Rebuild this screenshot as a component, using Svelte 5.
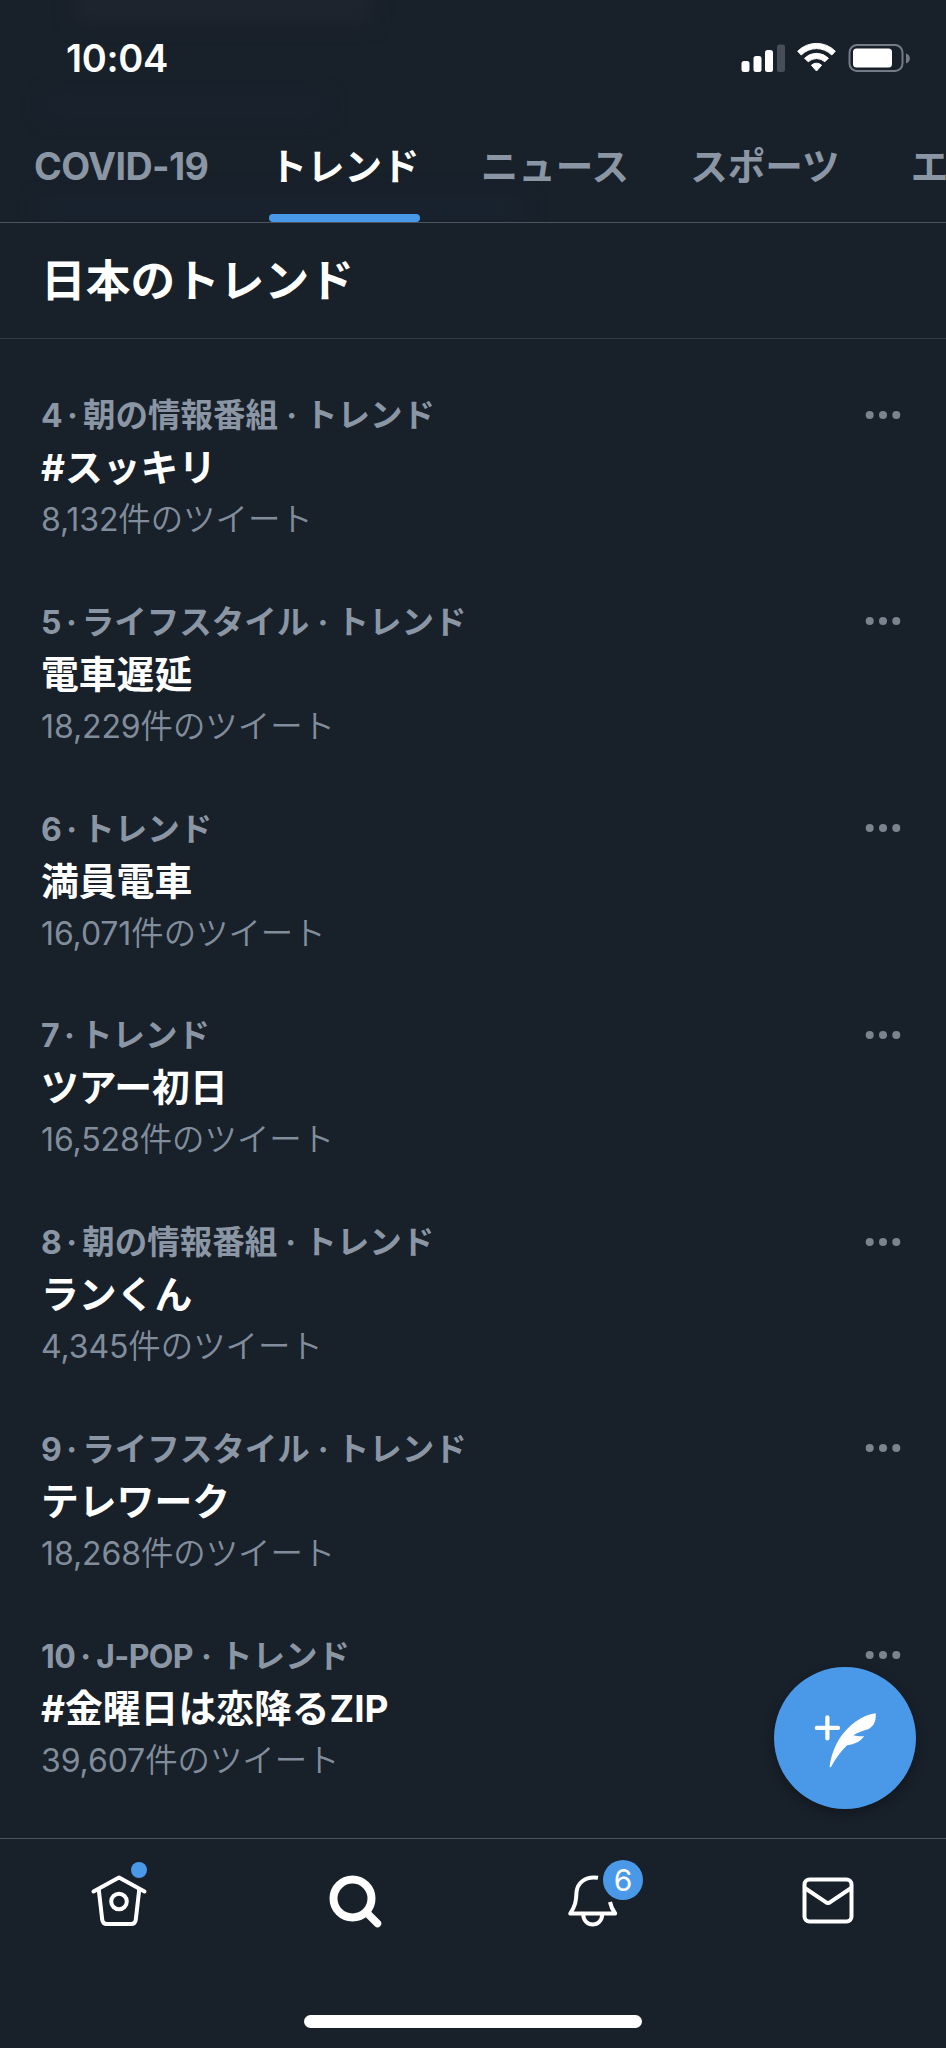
<script lang="ts">
	interface Trend {
		rank: number;
		category?: string;
		title: string;
		count: string;
	}

	const tabs = ['COVID-19', 'トレンド', 'ニュース', 'スポーツ', 'エンターテイメント'];
	let activeTab = 'トレンド';

	const trends: Trend[] = [
		{ rank: 4, category: '朝の情報番組', title: '#スッキリ', count: '8,132' },
		{ rank: 5, category: 'ライフスタイル', title: '電車遅延', count: '18,229' },
		{ rank: 6, title: '満員電車', count: '16,071' },
		{ rank: 7, title: 'ツアー初日', count: '16,528' },
		{ rank: 8, category: '朝の情報番組', title: 'ランくん', count: '4,345' },
		{ rank: 9, category: 'ライフスタイル', title: 'テレワーク', count: '18,268' },
		{ rank: 10, category: 'J-POP', title: '#金曜日は恋降るZIP', count: '39,607' }
	];

	// latin runs get their own size and tracking next to the japanese text
	function split(text: string) {
		return text.split(/([\x21-\x7e]+)/).filter(Boolean);
	}

	function isLatin(part: string) {
		return /^[\x21-\x7e]/.test(part);
	}
</script>

<div class="screen">
	<header>
		<div class="ghost ghost-a"></div>
		<div class="ghost ghost-b"></div>
		<div class="ghost ghost-c"></div>
		<div class="status">
			<span class="time">10:04</span>
			<svg class="status-icons" width="172" height="32" viewBox="0 0 172 32">
				<rect x="1.5" y="19" width="8" height="11" rx="2.5" fill="#fff" />
				<rect x="13.5" y="14" width="8" height="16" rx="2.5" fill="#fff" />
				<rect x="25" y="8" width="8" height="22" rx="2.5" fill="#fff" />
				<rect x="37" y="2.5" width="8" height="27.5" rx="2.5" fill="#474e59" />
				<path d="M57.7 9.2 A26.5 26.5 0 0 1 95.3 9.2 L91.8 13 A21.5 21.5 0 0 0 61.2 13 Z" fill="#fff" stroke="#fff" stroke-width="1" stroke-linejoin="round" />
				<path d="M64.6 16.2 A17 17 0 0 1 88.4 16.2 L84.8 19.8 A12.2 12.2 0 0 0 68.2 19.8 Z" fill="#fff" stroke="#fff" stroke-width="1" stroke-linejoin="round" />
				<path d="M71.4 23.2 A7.5 7.5 0 0 1 81.6 23.2 L76.5 29 Z" fill="#fff" stroke="#fff" stroke-width="1" stroke-linejoin="round" />
				<rect x="109.5" y="3" width="53" height="26" rx="7.5" fill="none" stroke="#757b85" stroke-width="2" />
				<rect x="113" y="6.5" width="39" height="19" rx="3.5" fill="#fff" />
				<path d="M166 11.5 C171.200 13 171.200 20 166 21.5 Z" fill="#757b85" />
			</svg>
		</div>
		<nav class="tabs">
			{#each tabs as tab}
				<button class="tab" class:active={tab === activeTab} class:latin-tab={isLatin(tab)} on:click={() => (activeTab = tab)}>
					{tab}
				</button>
			{/each}
		</nav>
	</header>

	<h1>日本のトレンド</h1>

	<main>
		{#each trends as trend}
			<article class="trend">
				<div class="info">
					<div class="meta">
						<span class="latin">{trend.rank}</span><span class="dot thin">·</span>
						{#if trend.category}
							{#each split(trend.category) as part}<span class:latin={isLatin(part)}>{part}</span>{/each}<span class="dot">·</span>
						{/if}
						<span>トレンド</span>
					</div>
					<div class="title">
						{#each split(trend.title) as part}<span class:latin={isLatin(part)}>{part}</span>{/each}
					</div>
					<div class="count"><span class="latin">{trend.count}</span><span>件のツイート</span></div>
				</div>
				<button class="more" aria-label="その他">
					<svg width="36" height="10" viewBox="0 0 36 10" fill="#7a848f">
						<circle cx="4.7" cy="5" r="4" />
						<circle cx="18" cy="5" r="4" />
						<circle cx="31.3" cy="5" r="4" />
					</svg>
				</button>
			</article>
		{/each}
	</main>

	<button class="compose" aria-label="ツイートする">
		<svg width="142" height="142" viewBox="0 0 141 141">
			<path d="M42.5 60.5H63.5M53 50V71" fill="none" stroke="#fff" stroke-width="4.2" stroke-linecap="round" />
			<path d="M55.2 99.200 C56.5 87 62 73.5 70 64.5 C79 54.5 90 47 101 46 C101.4 52 100 57.5 95.5 60.5 C91.5 63.2 85 63.5 79 67.7 C83 68.9 86.5 69 89.5 68.6 C86.5 73 81.5 77 72.5 77.6 C66.5 83.5 61 91 56.5 99.5 Z" fill="#fff" />
		</svg>
	</button>

	<footer>
		<div class="bar">
			<div class="item">
				<svg width="64" height="64" viewBox="0 0 64 64" fill="none" stroke="#fff" stroke-width="4" stroke-linejoin="round" stroke-linecap="round">
					<path d="M6.5 23.5 L32 9.5 L57.5 23.5" />
					<path d="M11.8 22 L15.2 51.5 Q15.7 56 20 56 H44 Q48.3 56 48.8 51.5 L52.2 22" />
					<circle cx="32" cy="33.5" r="7.8" />
				</svg>
				<span class="new-dot"></span>
			</div>
			<div class="item">
				<svg width="64" height="64" viewBox="0 0 64 64" fill="none" stroke="#fff" stroke-linecap="round">
					<circle cx="29.5" cy="30.5" r="19" stroke-width="8" />
					<path d="M44 45 L54.5 55.5" stroke-width="7.5" />
				</svg>
			</div>
			<div class="item">
				<svg width="64" height="64" viewBox="0 0 64 64" fill="none" stroke="#fff" stroke-width="4" stroke-linejoin="round">
					<path d="M38 9.8 C24.7 7.5 17.2 16 16.5 24 C16 34 15.2 38 10.2 45.5 H55.2 C52.7 42 51 39 50 34" />
					<path d="M23.2 46 C23.2 60 42.2 60 42.2 46" />
				</svg>
				<span class="badge">6</span>
			</div>
			<div class="item">
				<svg width="64" height="64" viewBox="0 0 64 64" fill="none" stroke="#fff" stroke-width="4" stroke-linejoin="round" stroke-linecap="round">
					<rect x="8.5" y="11.5" width="47" height="42" rx="5" />
					<path d="M9.5 20.5 L29.8 34.2 Q32 35.6 34.2 34.2 L54.5 20.5" />
				</svg>
			</div>
		</div>
		<div class="home-indicator"></div>
	</footer>
</div>

<style>
	:global(body) {
		background: #18202a;
	}

	.screen {
		position: relative;
		display: flex;
		flex-direction: column;
		width: 946px;
		height: 2048px;
		overflow: hidden;
		background: #18202a;
		color: #fff;
		font-family: 'Noto Sans CJK JP', sans-serif;
	}

	button {
		padding: 0;
		border: none;
		background: none;
		color: inherit;
		font: inherit;
		cursor: pointer;
	}

	header {
		position: relative;
		display: flex;
		flex-direction: column;
		box-sizing: border-box;
		height: 223px;
		flex: none;
		overflow: hidden;
		border-bottom: 1px solid #4d5560;
	}

	/* content scrolled under the translucent header */
	.ghost {
		position: absolute;
		filter: blur(10px);
	}

	.ghost-a {
		left: 75px;
		top: -12px;
		width: 295px;
		height: 34px;
		background: #1e252f;
	}

	.ghost-b {
		left: 45px;
		top: 96px;
		width: 280px;
		height: 20px;
		background: #19232f;
	}

	.ghost-c {
		left: 40px;
		top: 198px;
		width: 485px;
		height: 20px;
		background: #192430;
	}

	.status {
		position: relative;
		display: flex;
		justify-content: space-between;
		align-items: center;
		height: 116px;
		padding: 0 34px 0 66px;
	}

	.time {
		font-family: Inter, sans-serif;
		font-size: 38px;
		font-weight: 600;
		letter-spacing: -0.3px;
	}

	.tabs {
		position: relative;
		display: flex;
		flex: 1;
		gap: 61px;
		padding-left: 34px;
	}

	.tab {
		display: flex;
		flex: none;
		align-items: center;
		box-sizing: border-box;
		height: 106px;
		padding-bottom: 12px;
		color: #8b96a4;
		font-size: 37.6px;
		font-weight: 700;
		white-space: nowrap;
	}

	.tab:last-child {
		margin-left: 10px;
	}

	.tab.latin-tab {
		padding-bottom: 6px;
		font-family: Inter, sans-serif;
		letter-spacing: -0.6px;
	}

	.tab.active {
		position: relative;
		color: #fff;
	}

	.tab.active::after {
		content: '';
		position: absolute;
		left: 0;
		right: 0;
		bottom: 0;
		height: 8px;
		border-radius: 4px;
		background: #4a99e9;
	}

	h1 {
		box-sizing: border-box;
		flex: none;
		height: 116px;
		margin: 0;
		padding-left: 41px;
		border-bottom: 1px solid #323944;
		font-size: 44.7px;
		font-weight: 700;
		line-height: 109px;
	}

	main {
		flex: 1;
		padding-top: 48px;
	}

	.trend {
		display: flex;
		justify-content: space-between;
		align-items: flex-start;
		height: 206.8px;
		padding: 0 45px 0 41px;
	}

	.meta,
	.title,
	.count {
		height: 52px;
		line-height: 52px;
		white-space: nowrap;
	}

	.meta {
		display: flex;
		align-items: baseline;
		color: #8b96a4;
		font-size: 32.5px;
		font-weight: 700;
	}

	.title {
		font-size: 37.8px;
		font-weight: 700;
	}

	.count {
		color: #828d9b;
		font-size: 32.4px;
		font-weight: 350;
	}

	.latin {
		font-family: Inter, sans-serif;
	}

	.meta .latin {
		font-size: 32px;
		letter-spacing: -0.6px;
	}

	.title .latin {
		font-size: 37px;
	}

	.count .latin {
		font-size: 32px;
		font-weight: 400;
		letter-spacing: -0.1px;
	}

	.dot {
		width: 27px;
		font-family: Inter, sans-serif;
		text-align: center;
	}

	.dot.thin {
		width: 21px;
	}

	.more {
		display: flex;
		align-items: center;
		height: 55px;
	}

	.compose {
		position: absolute;
		left: 774px;
		top: 1667px;
		width: 142px;
		height: 142px;
		border-radius: 50%;
		background: #4a99e9;
		box-shadow: 0 4px 12px rgba(0, 0, 0, 0.3);
	}

	.compose svg {
		display: block;
	}

	footer {
		display: flex;
		flex-direction: column;
		align-items: center;
		justify-content: space-between;
		box-sizing: border-box;
		height: 210px;
		flex: none;
		padding-bottom: 20px;
		border-top: 1px solid #4d5560;
		background: #18202a;
	}

	.bar {
		display: flex;
		width: 100%;
	}

	.item {
		position: relative;
		display: flex;
		flex: 1;
		justify-content: center;
		padding: 29px 0 0 1px;
	}

	.new-dot {
		position: absolute;
		left: 131px;
		top: 23px;
		width: 16px;
		height: 16px;
		border-radius: 50%;
		background: #4a99e9;
	}

	.badge {
		position: absolute;
		left: 130px;
		top: 21px;
		width: 40px;
		height: 40px;
		border-radius: 50%;
		background: #4a99e9;
		font-family: Inter, sans-serif;
		font-size: 30px;
		line-height: 40px;
		text-align: center;
	}

	.home-indicator {
		width: 338px;
		height: 13px;
		border-radius: 7px;
		background: #fff;
	}
</style>
